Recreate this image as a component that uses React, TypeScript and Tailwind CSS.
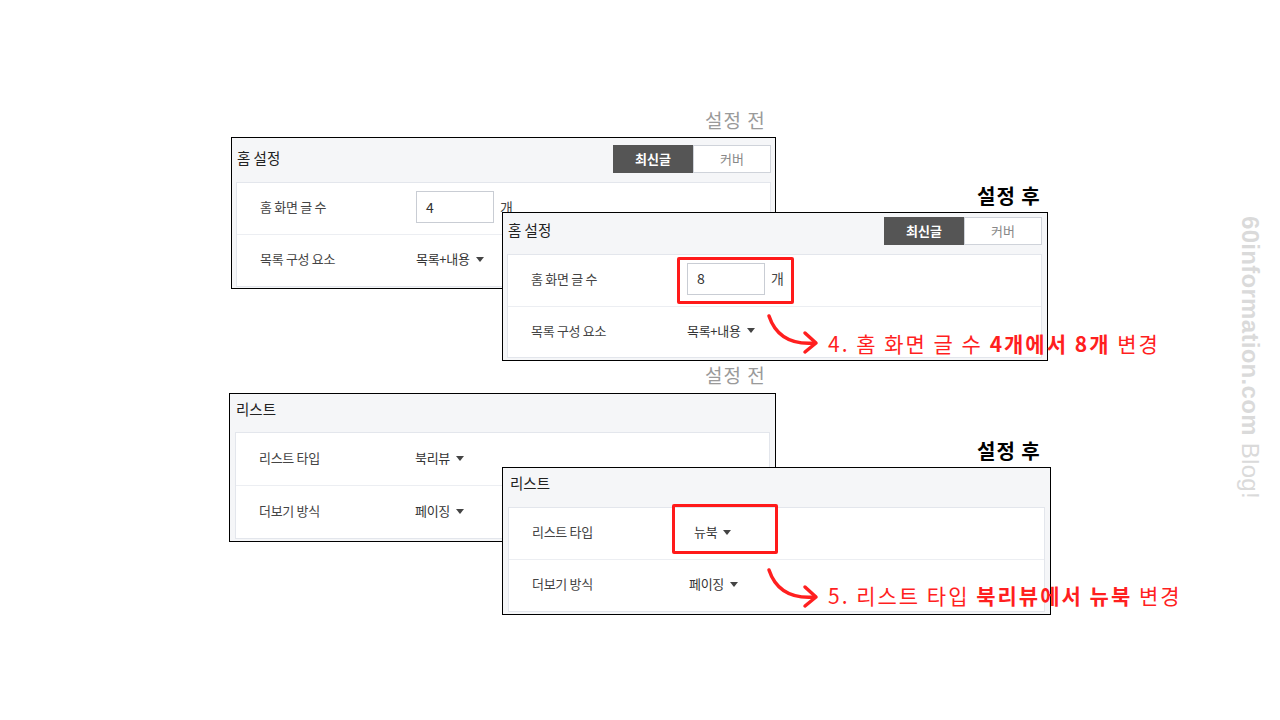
import React from "react";

const KR = "font-['Noto_Sans_CJK_KR','Noto_Sans',sans-serif]";

function Caret() {
  return (
    <svg width="8" height="5" viewBox="0 0 8 5" className="ml-[6px] mt-[1px]">
      <path d="M0 0 L8 0 L4 5 Z" fill="#444" />
    </svg>
  );
}

function Segmented({ mt }: { mt: string }) {
  return (
    <div className={`flex h-[28px] text-[13px] ${mt}`}>
      <div className="w-[80px] bg-[#555555] text-white font-bold flex items-center justify-center">최신글</div>
      <div className="w-[78px] bg-white border border-[#cfd3da] text-[#888] flex items-center justify-center">커버</div>
    </div>
  );
}

type Row = { label: string; value: React.ReactNode };

function Rows({ rows, labelW }: { rows: Row[]; labelW: string }) {
  return (
    <div className="flex-1 bg-white border border-[#e3e6ec] flex flex-col">
      {rows.map((r, i) => (
        <div
          key={i}
          className={`flex-1 flex items-center pl-[23px] pb-[3px] ${i > 0 ? "border-t border-[#eceef2]" : ""}`}
        >
          <div className={`${labelW} text-[13px] text-[#444] tracking-[-0.3px]`}>{r.label}</div>
          <div className="flex items-center text-[13px] text-[#333]">{r.value}</div>
        </div>
      ))}
    </div>
  );
}

function Select({ text }: { text: string }) {
  return (
    <span className="flex items-center tracking-[-0.3px]">
      {text}
      <Caret />
    </span>
  );
}

function CountInput({ v }: { v: string }) {
  return (
    <span className="flex items-center">
      <span className="w-[78px] h-[32px] border border-[#c9cdd4] bg-white flex items-center pl-[9px] text-[14px] text-[#333]">
        {v}
      </span>
      <span className="ml-[6px] text-[14px] text-[#444]">개</span>
    </span>
  );
}

function Arrow({ className }: { className: string }) {
  return (
    <svg width="60" height="45" viewBox="0 0 60 45" className={className}>
      <path d="M4 4 Q 14 34 50 31" fill="none" stroke="#ff1f1f" strokeWidth="3.5" strokeLinecap="round" />
      <path d="M40 21 L51 31 L40 40" fill="none" stroke="#ff1f1f" strokeWidth="3.5" strokeLinecap="round" strokeLinejoin="round" />
    </svg>
  );
}

export default function App() {
  return (
    <div className={`relative w-[1280px] h-[720px] bg-white overflow-hidden ${KR}`}>
      {/* 설정 전 (1) */}
      <div className="absolute left-[705px] top-[106px] text-[19px] text-[#9a9a9a] tracking-[1px]">설정 전</div>

      {/* Panel 1 */}
      <div className="absolute left-[231px] top-[137px] w-[545px] h-[152px] border border-black bg-[#f5f6f8] flex flex-col px-[4px] pb-[1px]">
        <div className="h-[44px] flex items-start justify-between">
          <span className="pl-[1px] pt-[9px] text-[14.5px] text-[#222]">홈 설정</span>
          <Segmented mt="mt-[7px]" />
        </div>
        <Rows
          labelW="w-[156px]"
          rows={[
            { label: "홈 화면 글 수", value: <CountInput v="4" /> },
            { label: "목록 구성 요소", value: <Select text="목록+내용" /> },
          ]}
        />
      </div>

      {/* 설정 후 (1) */}
      <div className="absolute left-[977px] top-[181px] text-[20px] font-bold text-black tracking-[1px]">설정 후</div>

      {/* Panel 2 */}
      <div className="absolute left-[502px] top-[212px] w-[546px] h-[149px] border border-black bg-[#f5f6f8] flex flex-col pl-[4px] pr-[5px] pb-[2px]">
        <div className="h-[41px] flex items-start justify-between">
          <span className="pl-[1px] pt-[6px] text-[14.5px] text-[#222]">홈 설정</span>
          <Segmented mt="mt-[4px]" />
        </div>
        <Rows
          labelW="w-[156px]"
          rows={[
            { label: "홈 화면 글 수", value: <CountInput v="8" /> },
            { label: "목록 구성 요소", value: <Select text="목록+내용" /> },
          ]}
        />
      </div>

      {/* Red box 1 */}
      <div className="absolute left-[677px] top-[257px] w-[117px] h-[47px] border-[3px] border-[#ff1a1a] rounded-[2px]" />
      <Arrow className="absolute left-[765px] top-[312px]" />
      <div className="absolute left-[828px] top-[328px] text-[21px] text-[#ff1f1f] tracking-[2px] whitespace-nowrap">
        4. 홈 화면 글 수 <b>4개에서 8개</b> 변경
      </div>

      {/* 설정 전 (2) */}
      <div className="absolute left-[705px] top-[361px] text-[19px] text-[#9a9a9a] tracking-[1px]">설정 전</div>

      {/* Panel 3 */}
      <div className="absolute left-[229px] top-[393px] w-[547px] h-[149px] border border-black bg-[#f5f6f8] flex flex-col px-[5px] pb-[2px]">
        <div className="h-[38px] flex items-start">
          <span className="pl-[1px] pt-[4px] text-[14.5px] text-[#222]">리스트</span>
        </div>
        <Rows
          labelW="w-[156px]"
          rows={[
            { label: "리스트 타입", value: <Select text="북리뷰" /> },
            { label: "더보기 방식", value: <Select text="페이징" /> },
          ]}
        />
      </div>

      {/* 설정 후 (2) */}
      <div className="absolute left-[977px] top-[436px] text-[20px] font-bold text-black tracking-[1px]">설정 후</div>

      {/* Panel 4 */}
      <div className="absolute left-[502px] top-[467px] w-[549px] h-[148px] border border-black bg-[#f5f6f8] flex flex-col px-[5px] pb-[2px]">
        <div className="h-[39px] flex items-start">
          <span className="pl-[2px] pt-[4px] text-[14.5px] text-[#222]">리스트</span>
        </div>
        <Rows
          labelW="w-[157px]"
          rows={[
            { label: "리스트 타입", value: <span className="pl-[5px]"><Select text="뉴북" /></span> },
            { label: "더보기 방식", value: <Select text="페이징" /> },
          ]}
        />
      </div>

      {/* Red box 2 */}
      <div className="absolute left-[672px] top-[504px] w-[106px] h-[50px] border-[3px] border-[#ff1a1a] rounded-[2px]" />
      <Arrow className="absolute left-[765px] top-[566px]" />
      <div className="absolute left-[828px] top-[580px] text-[21px] text-[#ff1f1f] tracking-[2px] whitespace-nowrap">
        5. 리스트 타입 <b>북리뷰에서 뉴북</b> 변경
      </div>

      {/* Watermark */}
      <div className="absolute left-[1237px] top-[216px] [writing-mode:vertical-rl] text-[24px] leading-[26px] tracking-[0.3px] text-[#dadada] font-['Liberation_Sans',Arial,sans-serif] whitespace-nowrap">
        <b>60information.com</b> Blog!
      </div>
    </div>
  );
}
